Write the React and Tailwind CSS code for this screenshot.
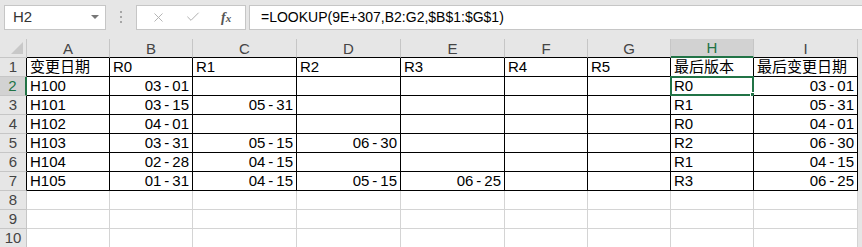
import { X, Check } from "lucide-react";

const cols = ["A", "B", "C", "D", "E", "F", "G", "H", "I"];
const widths = [83, 83, 104, 104, 104, 83, 83, 83, 104];

const rows = [
  ["变更日期", "R0", "R1", "R2", "R3", "R4", "R5", "最后版本", "最后变更日期"],
  ["H100", "03-01", "", "", "", "", "", "R0", "03-01"],
  ["H101", "03-15", "05-31", "", "", "", "", "R1", "05-31"],
  ["H102", "04-01", "", "", "", "", "", "R0", "04-01"],
  ["H103", "03-31", "05-15", "06-30", "", "", "", "R2", "06-30"],
  ["H104", "02-28", "04-15", "", "", "", "", "R1", "04-15"],
  ["H105", "01-31", "04-15", "05-15", "06-25", "", "", "R3", "06-25"],
  ["", "", "", "", "", "", "", "", ""],
  ["", "", "", "", "", "", "", "", ""],
  ["", "", "", "", "", "", "", "", ""],
];

const font = { fontFamily: '"Liberation Sans", "Noto Sans CJK SC", sans-serif' };

const Cell = ({ value, r, c }) => {
  const inTable = r < 7;
  const isDate = r > 0 && /^\d\d-\d\d$/.test(value);
  const selected = r === 1 && c === 7;
  return (
    <div
      className={`relative h-[19px] bg-white flex items-end pb-[1px] px-[3px] text-[15px] leading-[17px] text-black border-r border-b whitespace-nowrap overflow-visible ${inTable ? 'border-black' : 'border-[#d4d4d4]'} ${isDate ? 'justify-end' : 'justify-start'}`}
    >
      {isDate ? value.replace('-', '\u2009-\u2009') : value}
      {selected && (
        <div className="absolute -left-[1px] -top-[1px] w-[84px] h-[20px] border-2 border-[#217346]">
          <div className="absolute -right-[4px] -bottom-[4px] w-[6px] h-[6px] bg-[#217346] border border-white"></div>
        </div>
      )}
    </div>
  )
}

const App = () => {
  return (
    <div className="w-[862px] h-[247px] overflow-hidden bg-[#e6e6e6] select-none" style={font}>
      {/* formula bar */}
      <div className="flex items-center h-[32px] pt-[2px]">
        <div className="ml-[4px] w-[102px] h-[25px] bg-white border border-[#c6c6c6] flex items-center justify-between pl-[8px] pr-[6px]">
          <span className="text-[15px] text-[#333]">H2</span>
          <span className="w-0 h-0 border-l-[4px] border-r-[4px] border-t-[4px] border-l-transparent border-r-transparent border-t-[#777]"></span>
        </div>
        <div className="w-[30px] flex flex-col items-center gap-[3px]">
          <span className="w-[2px] h-[2px] bg-[#a6a6a6]"></span>
          <span className="w-[2px] h-[2px] bg-[#a6a6a6]"></span>
          <span className="w-[2px] h-[2px] bg-[#a6a6a6]"></span>
        </div>
        <div className="w-[110px] h-[25px] bg-white border border-[#c6c6c6] flex items-center justify-around px-[4px]">
          <X size={15} strokeWidth={1.5} className="text-[#b0b0b0]" />
          <Check size={16} strokeWidth={1.5} className="text-[#b0b0b0]" />
          <span className="text-[14px] italic font-bold text-[#555]" style={{ fontFamily: '"Liberation Serif", serif' }}>f<span className="text-[11px]">x</span></span>
        </div>
        <div className="ml-[3px] flex-1 h-[25px] bg-white border border-[#c6c6c6] border-r-0 flex items-center pl-[11px] text-[14px] text-black">
          =LOOKUP(9E+307,B2:G2,$B$1:$G$1)
        </div>
      </div>

      {/* sheet */}
      <div className="mt-[7px] grid" style={{ gridTemplateColumns: `27px ${widths.map(w => w + 'px').join(' ')}` }}>
        <div className="h-[19px] bg-[#e6e6e6] border-r border-b border-[#c6c6c6] relative overflow-hidden">
          <svg className="absolute right-[3px] bottom-[3px]" width="12" height="12"><polygon points="12,0 12,12 0,12" fill="#c8c8c8" /></svg>
        </div>
        {cols.map((c) => (
          <div
            key={c}
            className={`h-[19px] flex items-center justify-center text-[15px] leading-[17px] border-r border-[#c6c6c6] ${c === 'H' ? 'bg-[#d2d2d2] text-[#217346] border-b-2 border-b-[#217346]' : 'bg-[#e6e6e6] text-[#444] border-b border-b-black'}`}
          >
            {c}
          </div>
        ))}

        {rows.map((row, r) => (
          [
            <div
              key={'h' + r}
              className={`h-[19px] flex items-end justify-center pb-[1px] text-[15px] leading-[17px] border-b border-[#c6c6c6] ${r === 1 ? 'bg-[#d2d2d2] text-[#217346] border-r-2 border-r-[#217346]' : 'bg-[#e6e6e6] text-[#444] border-r'} ${r < 7 && r !== 1 ? 'border-r-black' : ''}`}
            >
              {r + 1}
            </div>,
            ...row.map((v, c) => <Cell key={r + '-' + c} value={v} r={r} c={c} />)
          ]
        ))}
      </div>
    </div>
  )
}

export default App;
